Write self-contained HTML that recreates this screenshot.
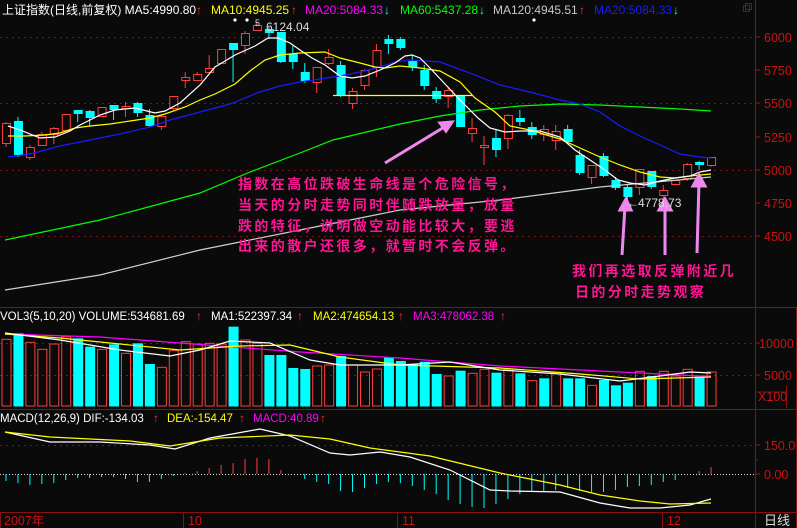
<!DOCTYPE html>
<html><head><meta charset="utf-8"><style>
html,body{margin:0;padding:0;background:#0a0a0a;}
svg{display:block;}
text{font-family:"Liberation Sans","Noto Sans CJK SC",sans-serif;}
.cj{font-family:"Liberation Sans","WenQuanYi Zen Hei","Noto Sans CJK SC",sans-serif;font-weight:bold;fill:#ff1493;font-size:14px;letter-spacing:2.4px;}
</style></head><body>
<svg id="s" width="797" height="528" viewBox="0 0 797 528" xmlns="http://www.w3.org/2000/svg">
<rect width="797" height="528" fill="#0a0a0a"/>
<g stroke="#8a1010" stroke-width="1" fill="none">
<line x1="755.5" y1="0" x2="755.5" y2="528"/>
<line x1="796.5" y1="307" x2="796.5" y2="528"/>
<line x1="0" y1="307.5" x2="797" y2="307.5"/>
<line x1="0" y1="409.5" x2="797" y2="409.5"/>
<line x1="0" y1="512.5" x2="797" y2="512.5"/>
<line x1="183.5" y1="512" x2="183.5" y2="528"/>
<line x1="397.5" y1="512" x2="397.5" y2="528"/>
<line x1="662.5" y1="512" x2="662.5" y2="528"/>
<line x1="0.5" y1="512" x2="0.5" y2="528"/>
<line x1="756" y1="392" x2="786" y2="392"/>
<line x1="786.5" y1="386" x2="786.5" y2="408"/>
</g>
<g stroke="#8a1010" stroke-dasharray="2,4">
<line x1="0" y1="37.5" x2="755" y2="37.5"/><line x1="0" y1="103.5" x2="755" y2="103.5"/>
<line x1="0" y1="170.5" x2="755" y2="170.5"/><line x1="0" y1="236.5" x2="755" y2="236.5"/>
<line x1="0" y1="343.5" x2="755" y2="343.5"/><line x1="0" y1="375.5" x2="755" y2="375.5"/>
<line x1="0" y1="445.5" x2="755" y2="445.5"/>
</g>
<line x1="0" y1="474.5" x2="755" y2="474.5" stroke="#ddd" stroke-dasharray="1,2"/>
<g stroke="#a01010"><line x1="755" y1="70" x2="760" y2="70"/><line x1="755" y1="137" x2="760" y2="137"/><line x1="755" y1="203" x2="760" y2="203"/><line x1="755" y1="37" x2="760" y2="37"/><line x1="755" y1="103" x2="760" y2="103"/><line x1="755" y1="170" x2="760" y2="170"/><line x1="755" y1="236" x2="760" y2="236"/><line x1="755" y1="343" x2="760" y2="343"/><line x1="755" y1="375" x2="760" y2="375"/><line x1="755" y1="445" x2="760" y2="445"/><line x1="755" y1="474" x2="760" y2="474"/><line x1="755" y1="460" x2="758" y2="460"/></g>
<g fill="#d01010" font-size="12.5">
<text x="764" y="42">6000</text><text x="764" y="75">5750</text><text x="764" y="108">5500</text><text x="764" y="142">5250</text><text x="764" y="175">5000</text><text x="764" y="208">4750</text><text x="764" y="241">4500</text>
<text x="759" y="348">10000</text><text x="764" y="380">5000</text><text x="758" y="401">X100</text>
<text x="764" y="450">150.0</text><text x="764" y="479">0.00</text>
<text x="4" y="525">2007年</text><text x="188" y="525">10</text><text x="402" y="525">11</text><text x="667" y="525">12</text>
</g>
<text x="764" y="525" fill="#ddd" font-size="13">日线</text>
<rect x="743.5" y="5.5" width="6" height="6" fill="none" stroke="#8a1010"/><rect x="745.5" y="3.5" width="6" height="6" fill="none" stroke="#8a1010"/>
<g id="cd"></g>
<g fill="none" stroke-width="1.2">
<polyline stroke="#00ff00" points="5,240 100,220 200,193 250,172 300,153 333,140 400,124 440,116 480,110 520,106 560,104 600,105 640,107 680,109 711,111"/>
<polyline stroke="#cfcfcf" points="5,290 100,275 200,250 300,230 400,210 500,200 600,187 711,177"/>
<polyline stroke="#1a1aff" points="8,157 30,154 60,146 90,140 120,134 150,127 170,120 200,112 230,104 260,92 280,86 300,82 320,79 340,76 360,72 380,67 395,62 410,60 440,62 470,73 500,85 530,92 560,100 580,104 600,112 620,126 640,136 660,145 680,154 700,157 711,158"/>
<polyline stroke="#ffff00" points="8,136 25,136 45,135 60,133 75,128 90,126 110,124 130,121 150,118 165,114 185,107 200,100 215,94 235,84 250,71 265,60 280,55 300,53 325,52 340,58 360,63 375,67 385,68 400,66 420,68 440,71 460,82 475,98 495,112 510,126 530,130 560,139 580,148 600,157 620,165 640,172 660,177 675,178 690,176 711,174"/>
<polyline stroke="#ffffff" points="8,126 20,130 40,138 55,137 70,131 80,125 100,115 115,110 135,108 155,113 165,111 180,103 200,85 215,67 235,55 255,46 268,38 278,38 290,43 300,50 312,58 325,65 340,76 352,78 365,76 380,70 395,63 405,56 412,55 420,58 430,68 445,84 460,100 478,118 490,128 505,132 520,131 540,131 560,137 575,150 590,160 605,170 618,180 630,183 645,185 660,181 675,178 690,176 700,172 711,170"/>
<line x1="333" y1="95.5" x2="472" y2="95.5" stroke="#ffff00"/>
<polyline stroke="#ff00ff" points="5,334 100,337 180,343 300,352 400,358 500,366 600,371 700,376 711,376"/>
<polyline stroke="#ffff00" points="5,334 60,338 120,344 180,350 240,346 290,345 340,357 400,365 500,368 580,374 640,379 711,377"/>
<polyline stroke="#ffffff" points="5,333 60,340 120,350 170,356 200,350 230,341 270,343 310,360 340,365 400,365 450,362 500,370 560,374 620,381 660,376 690,372 711,373"/>
<polyline stroke="#ffffff" points="5,432 50,442 100,442 150,445 175,449 210,438 260,429 290,436 330,453 350,455 380,452 410,457 450,470 490,490 510,491 560,492 600,503 630,508 660,508 690,505 711,499"/>
<polyline stroke="#ffff00" points="5,432 50,437 130,441 170,446 220,438 290,435 330,439 370,448 430,456 500,473 560,485 600,495 640,501 670,504 711,503"/>
</g>
<g stroke="#ee88ee" stroke-width="3" fill="#ee88ee">
<line x1="385" y1="163" x2="446" y2="126"/><polygon points="452,122 440,123 446,131"/>
<line x1="622" y1="255" x2="625" y2="206"/><polygon points="626,199 620,210 631,210"/>
<line x1="665" y1="255" x2="665" y2="206"/><polygon points="665,199 659,210 671,210"/>
<line x1="697" y1="253" x2="699" y2="182"/><polygon points="699,175 693,186 705,186"/>
</g>
<g fill="#fff" font-size="12">
<text x="2" y="14">上证指数(日线,前复权) MA5:4990.80</text>
<text x="211" y="14" fill="#ffff00">MA10:4945.25</text>
<text x="305" y="14" fill="#ff00ff">MA20:5084.33</text>
<text x="400" y="14" fill="#00ff00">MA60:5437.28</text>
<text x="493" y="14" fill="#c8c8c8">MA120:4945.51</text>
<text x="594" y="14" fill="#1a1aff">MA20:5084.33</text>
<text x="266" y="31" fill="#ddd">6124.04</text>
<text x="255" y="26" fill="#ddd" font-size="9">5</text>
<text x="638" y="207" fill="#ddd">4778.73</text>
<text x="627" y="207" fill="#ddd">←</text>
<circle cx="235" cy="20" r="1.6"/><circle cx="247" cy="20" r="1.6"/><circle cx="534" cy="20" r="1.6"/>
<text x="0" y="320" font-size="11.5">VOL3(5,10,20) VOLUME:534681.69</text>
<text x="211" y="320" font-size="11.5">MA1:522397.34</text>
<text x="313" y="320" font-size="11.5" fill="#ffff00">MA2:474654.13</text>
<text x="413" y="320" font-size="11.5" fill="#ff00ff">MA3:478062.38</text>
<text x="0" y="422" font-size="11.5">MACD(12,26,9) DIF:-134.03</text>
<text x="167" y="422" font-size="11.5" fill="#ffff00">DEA:-154.47</text>
<text x="253" y="422" font-size="11.5" fill="#ff00ff">MACD:40.89</text>
</g>
<g fill="#ff3030" font-size="12">
<text x="196" y="14">↑</text><text x="291" y="14">↑</text><text x="384" y="14" fill="#00ffff">↓</text><text x="479" y="14" fill="#00ffff">↓</text><text x="579" y="14">↑</text><text x="673" y="14" fill="#00ffff">↓</text>
<text x="196" y="320">↑</text><text x="297" y="320">↑</text><text x="398" y="320">↑</text><text x="500" y="320">↑</text>
<text x="153" y="422">↑</text><text x="239" y="422">↑</text><text x="320" y="422">↑</text></g>
<text class="cj" x="238" y="189">指数在高位跌破生命线是个危险信号，</text>
<text class="cj" x="238" y="210">当天的分时走势同时伴随跌放量，放量</text>
<text class="cj" x="238" y="231">跌的特征，说明做空动能比较大，要逃</text>
<text class="cj" x="238" y="251">出来的散户还很多，就暂时不会反弹。</text>
<text class="cj" x="572" y="276">我们再选取反弹附近几</text>
<text class="cj" x="575" y="297">日的分时走势观察</text>
</svg>
<script>
var C=[["r",123,143,122,147],["c",121,155,117,157],["r",147,157,145,160],["r",134,145,132,146],["r",128,134,127,144],["r",114,130,114,130],["c",110,114,110,122],["c",111,118,110,127],["r",107,116,107,117],["c",105,110,105,120],["r",106,108,102,117],["c",103,113,102,117],["c",115,126,109,127],["r",116,126,115,130],["r",96,108,96,110],["r",77,80,72,88],["r",74,80,72,80],["r",68,72,55,73],["r",49,63,49,63],["c",43,50,43,82],["r",33,45,31,54],["r",25,30,22,30],["c",29,33,27,39],["c",32,62,32,63],["c",54,62,46,69],["c",72,81,63,83],["r",67,82,67,93],["r",57,63,49,65],["c",65,96,61,97],["r",91,103,88,109],["r",70,85,69,90],["r",50,67,44,77],["c",39,44,35,54],["c",39,48,37,50],["c",61,67,55,71],["c",70,86,65,90],["c",91,99,87,103],["r",90,96,88,108],["c",96,127,95,127],["r",128,133,118,142],["r",145,147,136,165],["c",138,150,130,157],["r",115,138,114,149],["c",118,122,110,126],["c",127,135,122,139],["r",129,134,125,141],["r",131,140,125,150],["c",129,142,125,143],["c",155,173,150,175],["r",165,177,165,184],["c",156,176,153,177],["c",180,188,177,190],["c",187,197,184,200],["r",169,187,169,195],["c",171,187,171,189],["r",190,195,185,203],["r",180,184,180,185],["r",164,178,163,181],["c",162,165,161,170],["r",157,165,157,167]];
var V=[["r",118],["c",100],["r",127],["r",148],["r",132],["r",110],["c",115],["c",140],["r",148],["c",133],["r",160],["c",130],["c",192],["r",202],["r",152],["r",125],["r",132],["r",130],["r",132],["c",80],["r",120],["r",130],["c",165],["c",165],["c",204],["c",207],["r",198],["r",195],["c",168],["r",195],["r",216],["r",207],["c",172],["c",183],["c",192],["c",185],["c",222],["r",228],["c",212],["r",220],["r",208],["c",218],["r",208],["c",220],["r",242],["c",235],["r",218],["c",235],["c",235],["r",256],["c",240],["c",256],["c",248],["r",214],["c",228],["r",214],["r",228],["r",208],["c",230],["r",216]];
var H=[7,9,11,10,9,6,4,4,3,3,5,8,8,5,2,-1,-3,-6,-9,-11,-15,-16,-15,-4,0,5,8,10,17,18,14,10,8,9,12,16,20,26,30,33,34,30,25,20,18,17,16,14,17,18,18,16,13,12,11,8,6,0,-3,-7];
var s="",R="#ff3c3c",Y="#00ffff";
for(var i=0;i<60;i++){var x=6+11.95*i,c=C[i],col=c[0]=="r"?R:Y;
s+='<line x1="'+x+'" y1="'+c[3]+'" x2="'+x+'" y2="'+c[4]+'" stroke="'+col+'"/>';
var h=Math.max(c[2]-c[1],1);
if(c[0]=="r")s+='<rect x="'+(x-3.5)+'" y="'+c[1]+'.5" width="8" height="'+h+'" fill="#0a0a0a" stroke="'+R+'"/>';
else s+='<rect x="'+(x-4)+'" y="'+c[1]+'" width="9" height="'+h+'" fill="'+Y+'"/>';
var v=V[i],vt=300+v[1]/3;
if(v[0]=="r")s+='<rect x="'+(x-4)+'" y="'+vt+'" width="9" height="'+(406-vt)+'" fill="none" stroke="'+R+'"/>';
else s+='<rect x="'+(x-4.5)+'" y="'+vt+'" width="10" height="'+(406.5-vt)+'" fill="'+Y+'"/>';
var hv=H[i];if(hv!=0)s+='<line x1="'+x+'" y1="474" x2="'+x+'" y2="'+(474+hv)+'" stroke="'+(hv<0?R:Y)+'"/>';}
document.getElementById("cd").innerHTML=s;
</script>
</body></html>
